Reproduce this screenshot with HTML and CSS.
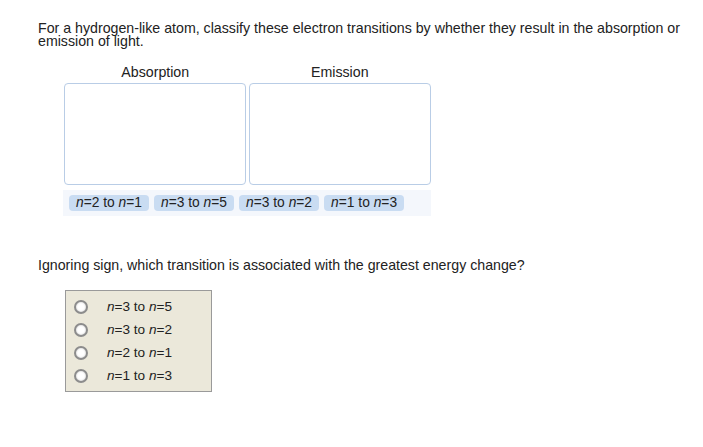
FILE: index.html
```html
<!DOCTYPE html>
<html>
<head>
<meta charset="utf-8">
<link rel="stylesheet" href="styles.css">
</head>
<body>
<div class="page">
  <p class="prompt">For a hydrogen-like atom, classify these electron transitions by whether they result in the absorption or emission of light.</p>
  <div class="sorter">
    <div class="bins">
      <div class="bin">
        <div class="bin-title">Absorption</div>
        <div class="bin-box"></div>
      </div>
      <div class="bin">
        <div class="bin-title">Emission</div>
        <div class="bin-box"></div>
      </div>
    </div>
    <div class="tray">
      <span class="chip"><i>n</i>=2 to <i>n</i>=1</span>
      <span class="chip"><i>n</i>=3 to <i>n</i>=5</span>
      <span class="chip"><i>n</i>=3 to <i>n</i>=2</span>
      <span class="chip"><i>n</i>=1 to <i>n</i>=3</span>
    </div>
  </div>
  <p class="question">Ignoring sign, which transition is associated with the greatest energy change?</p>
  <div class="choices">
    <label class="choice"><span class="radio"></span><span><i>n</i>=3 to <i>n</i>=5</span></label>
    <label class="choice"><span class="radio"></span><span><i>n</i>=3 to <i>n</i>=2</span></label>
    <label class="choice"><span class="radio"></span><span><i>n</i>=2 to <i>n</i>=1</span></label>
    <label class="choice"><span class="radio"></span><span><i>n</i>=1 to <i>n</i>=3</span></label>
  </div>
</div>
</body>
</html>
```

FILE: styles.css
```css
html, body {
  margin: 0;
  padding: 0;
  background: #ffffff;
}
body {
  font-family: "Liberation Sans", Arial, sans-serif;
  color: #222222;
  font-size: 14.2px;
}
.page {
  padding: 22px 10px 0 38px;
}
.prompt {
  margin: 0;
  line-height: 13px;
  width: 650px;
}
.sorter {
  margin-left: 25px;
  margin-top: 18px;
  width: 368px;
}
.bins {
  display: flex;
  gap: 2px;
  padding-left: 1px;
}
.bin {
  width: 183px;
  display: flex;
  flex-direction: column;
  align-items: center;
}
.bin-title {
  height: 17px;
  line-height: 13px;
}
.bin-box {
  width: 180px;
  height: 100px;
  border: 1px solid #b9cde6;
  border-radius: 4px;
  align-self: flex-start;
}
.tray {
  margin-top: 5px;
  background: #f4f7fc;
  height: 26px;
  display: flex;
  align-items: center;
  gap: 5px;
  padding-left: 6px;
}
.chip {
  background: #c9dcf2;
  border-radius: 4px;
  height: 16px;
  line-height: 16px;
  font-size: 13.8px;
  padding: 0 7px;
  color: #222222;
  white-space: nowrap;
}
.question {
  margin: 42px 0 0 0;
  line-height: 14px;
}
.choices {
  margin: 18px 0 0 27px;
  width: 145px;
  background: #ebe8da;
  border: 1px solid #9a9a9a;
  padding: 4px 0 4px 0;
  display: flex;
  flex-direction: column;
}
.choice {
  display: flex;
  align-items: center;
  height: 23px;
  font-size: 13.6px;
  color: #222222;
}
.radio {
  width: 10px;
  height: 10px;
  border: 2px solid #8c8c8c;
  border-radius: 50%;
  background: #ffffff;
  box-shadow: inset 0 0 2px rgba(0,0,0,0.25);
  margin-left: 8px;
  margin-right: 19px;
  flex-shrink: 0;
}
```
